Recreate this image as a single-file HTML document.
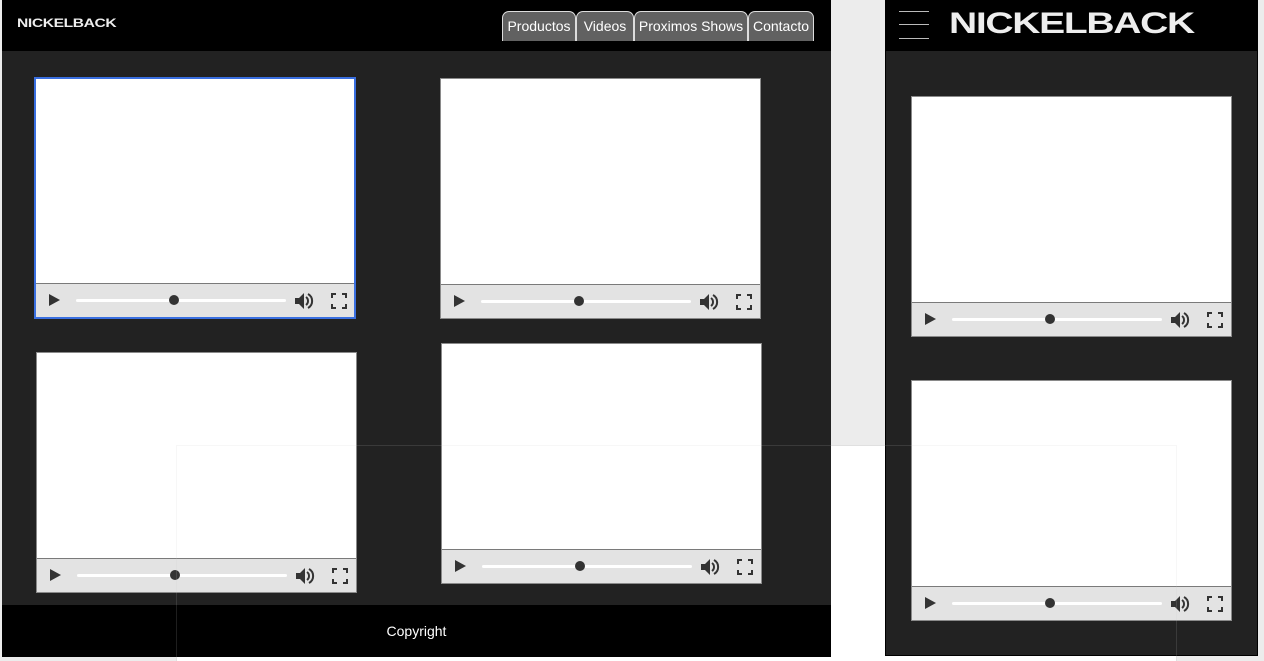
<!DOCTYPE html>
<html style="overflow:hidden;height:661px"><head><meta charset="utf-8"><style>
*{margin:0;padding:0;box-sizing:border-box}
body{width:1264px;height:661px;background:#ececec;position:relative;overflow:hidden;font-family:"Liberation Sans",Arial,sans-serif}
.abs{position:absolute}
.v{position:absolute;width:321px;height:241px;background:#fff;border:1px solid #8a8a8a}
.v.sel{border:2px solid #3a6fe0}
.cb{position:absolute;left:0;right:0;bottom:0;height:34px;background:#e3e3e3;border-top:1px solid #7a7a7a}
.play{position:absolute;left:13px;top:10px;width:0;height:0;border-left:11px solid #333;border-top:6.5px solid transparent;border-bottom:6.5px solid transparent}
.trk{position:absolute;left:40px;top:15px;width:210px;height:3px;background:#fff;border-radius:2px}
.knob{position:absolute;left:133px;top:11px;width:10px;height:10px;border-radius:50%;background:#333}
.vol{position:absolute;left:257px;top:7px}
.fs{position:absolute;left:295px;top:9px}
.tab{position:absolute;top:11px;height:30px;background:#616161;border:1px solid #ddd;border-bottom:none;border-radius:7px 7px 0 0;color:#fff;font-size:14px;line-height:28px;text-align:center}
</style></head><body>
<div class="abs" style="left:176px;top:445px;width:1001px;height:216px;background:#fff;border:1px solid #e4e4e4;border-bottom:none"></div>

<!-- left panel -->
<div class="abs" style="left:2px;top:0;width:829px;height:657px;background:#222"></div>
<div class="abs" style="left:2px;top:0;width:829px;height:51px;background:#000"></div>
<div class="abs" style="left:17px;top:17px;color:#eee;font-weight:bold;font-size:12px;line-height:13px;transform:scaleX(1.3);transform-origin:left;letter-spacing:-0.3px">NICKELBACK</div>
<div class="tab" style="left:502px;width:74px">Productos</div>
<div class="tab" style="left:576px;width:58px">Videos</div>
<div class="tab" style="left:634px;width:114px">Proximos Shows</div>
<div class="tab" style="left:748px;width:66px">Contacto</div>
<div class="abs" style="left:2px;top:605px;width:829px;height:52px;background:#000;color:#fff;font-size:14px;text-align:center;line-height:52px">Copyright</div>

<!-- right panel -->
<div class="abs" style="left:885px;top:0;width:373px;height:656px;background:#222;border:1px solid #000"></div>
<div class="abs" style="left:885px;top:0;width:373px;height:51px;background:#000"></div>
<div class="abs" style="left:899px;top:11px;width:30px;height:1px;background:#bbb"></div>
<div class="abs" style="left:899px;top:24px;width:30px;height:1px;background:#bbb"></div>
<div class="abs" style="left:899px;top:38px;width:30px;height:1px;background:#bbb"></div>
<div class="abs" style="left:949px;top:8px;color:#eee;font-weight:bold;font-size:30px;line-height:31px;transform:scaleX(1.3);transform-origin:left;letter-spacing:-1px">NICKELBACK</div>

<!-- videos -->
<div class="v sel" style="left:34px;top:77px;width:322px;height:242px"><div class="cb"><i class="play"></i><i class="trk"></i><i class="knob"></i>
<svg class="vol" width="22" height="20" viewBox="0 0 22 20"><path d="M2 7h4l5-5v16l-5-5H2z" fill="#333"/><path d="M13 6a5 5 0 0 1 0 8" stroke="#333" stroke-width="2" fill="none"/><path d="M15 3a8 8 0 0 1 0 14" stroke="#333" stroke-width="2" fill="none"/></svg>
<svg class="fs" width="16" height="16" viewBox="0 0 16 16" fill="none" stroke="#333" stroke-width="2"><path d="M1 5V1h4M11 1h4v4M15 11v4h-4M5 15H1v-4"/></svg></div></div>

<div class="v" style="left:440px;top:78px"><div class="cb"><i class="play"></i><i class="trk"></i><i class="knob"></i>
<svg class="vol" width="22" height="20" viewBox="0 0 22 20"><path d="M2 7h4l5-5v16l-5-5H2z" fill="#333"/><path d="M13 6a5 5 0 0 1 0 8" stroke="#333" stroke-width="2" fill="none"/><path d="M15 3a8 8 0 0 1 0 14" stroke="#333" stroke-width="2" fill="none"/></svg>
<svg class="fs" width="16" height="16" viewBox="0 0 16 16" fill="none" stroke="#333" stroke-width="2"><path d="M1 5V1h4M11 1h4v4M15 11v4h-4M5 15H1v-4"/></svg></div></div>

<div class="v" style="left:36px;top:352px"><div class="cb"><i class="play"></i><i class="trk"></i><i class="knob"></i>
<svg class="vol" width="22" height="20" viewBox="0 0 22 20"><path d="M2 7h4l5-5v16l-5-5H2z" fill="#333"/><path d="M13 6a5 5 0 0 1 0 8" stroke="#333" stroke-width="2" fill="none"/><path d="M15 3a8 8 0 0 1 0 14" stroke="#333" stroke-width="2" fill="none"/></svg>
<svg class="fs" width="16" height="16" viewBox="0 0 16 16" fill="none" stroke="#333" stroke-width="2"><path d="M1 5V1h4M11 1h4v4M15 11v4h-4M5 15H1v-4"/></svg></div></div>

<div class="v" style="left:441px;top:343px"><div class="cb"><i class="play"></i><i class="trk"></i><i class="knob"></i>
<svg class="vol" width="22" height="20" viewBox="0 0 22 20"><path d="M2 7h4l5-5v16l-5-5H2z" fill="#333"/><path d="M13 6a5 5 0 0 1 0 8" stroke="#333" stroke-width="2" fill="none"/><path d="M15 3a8 8 0 0 1 0 14" stroke="#333" stroke-width="2" fill="none"/></svg>
<svg class="fs" width="16" height="16" viewBox="0 0 16 16" fill="none" stroke="#333" stroke-width="2"><path d="M1 5V1h4M11 1h4v4M15 11v4h-4M5 15H1v-4"/></svg></div></div>

<div class="v" style="left:911px;top:96px"><div class="cb"><i class="play"></i><i class="trk"></i><i class="knob"></i>
<svg class="vol" width="22" height="20" viewBox="0 0 22 20"><path d="M2 7h4l5-5v16l-5-5H2z" fill="#333"/><path d="M13 6a5 5 0 0 1 0 8" stroke="#333" stroke-width="2" fill="none"/><path d="M15 3a8 8 0 0 1 0 14" stroke="#333" stroke-width="2" fill="none"/></svg>
<svg class="fs" width="16" height="16" viewBox="0 0 16 16" fill="none" stroke="#333" stroke-width="2"><path d="M1 5V1h4M11 1h4v4M15 11v4h-4M5 15H1v-4"/></svg></div></div>

<div class="v" style="left:911px;top:380px"><div class="cb"><i class="play"></i><i class="trk"></i><i class="knob"></i>
<svg class="vol" width="22" height="20" viewBox="0 0 22 20"><path d="M2 7h4l5-5v16l-5-5H2z" fill="#333"/><path d="M13 6a5 5 0 0 1 0 8" stroke="#333" stroke-width="2" fill="none"/><path d="M15 3a8 8 0 0 1 0 14" stroke="#333" stroke-width="2" fill="none"/></svg>
<svg class="fs" width="16" height="16" viewBox="0 0 16 16" fill="none" stroke="#333" stroke-width="2"><path d="M1 5V1h4M11 1h4v4M15 11v4h-4M5 15H1v-4"/></svg></div></div>

<div class="abs" style="left:176px;top:445px;width:1001px;height:216px;border:1px solid rgba(200,200,200,0.15);border-bottom:none"></div>
</body></html>
